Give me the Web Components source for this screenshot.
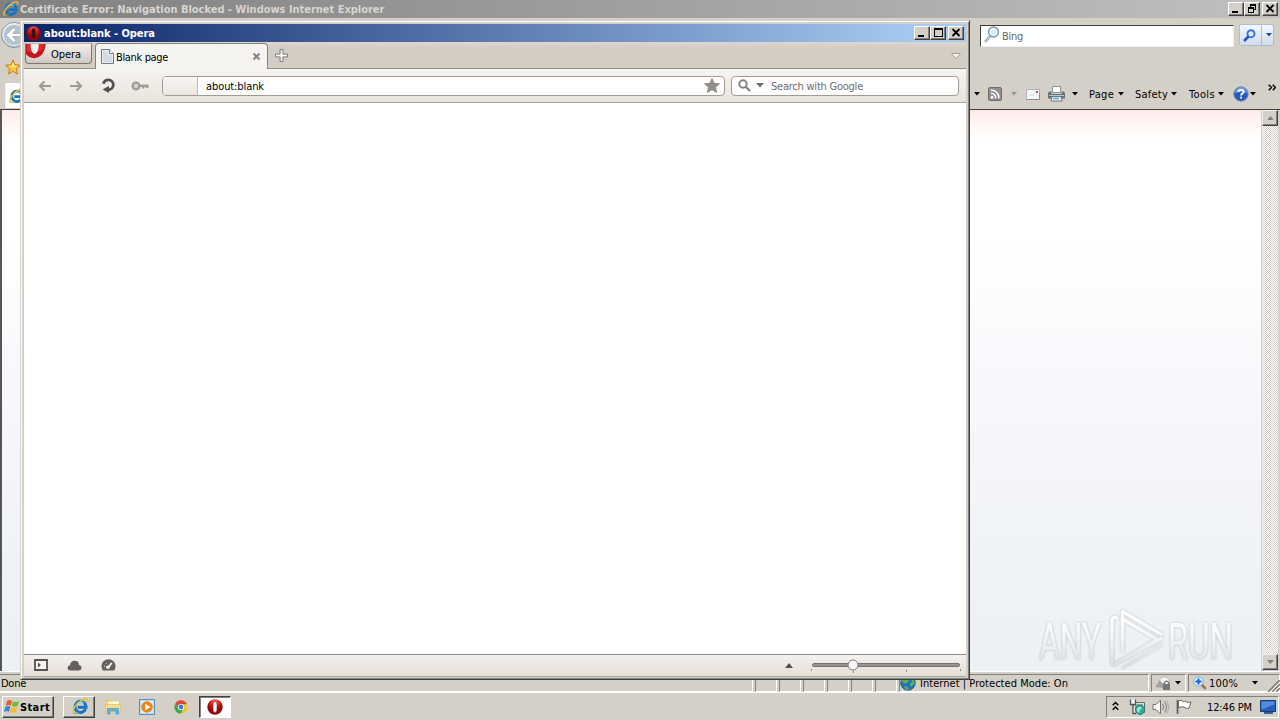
<!DOCTYPE html>
<html lang="en">
<head>
<meta charset="utf-8">
<title>Desktop</title>
<style>
  html, body { margin: 0; width: 1280px; height: 720px; overflow: hidden; background: #d4d0c8; }
  body { font: 11px/14px "DejaVu Sans Condensed", "DejaVu Sans", sans-serif; color: #000; }
</style>
</head>
<body>
<desk-top></desk-top>

<script>
const ICONS = {
  ie: `<svg viewBox="0 0 16 16"><path d="M12.8 10.4A5.2 5.2 0 1 1 13 6.8L13.2 8.6H5.4" fill="none" stroke="#1673c4" stroke-width="2.8"/><path d="M4 6.3Q7 2.5 11 4.8" fill="none" stroke="#7ed0f5" stroke-width="1.3"/><path d="M1.6 14.5C-.8 12.4 4 4.5 10.2 1.7 13.4.3 15.8.5 14.3 3.8" fill="none" stroke="#e9bd32" stroke-width="1.5"/><path d="M1.7 14.4Q3 15.3 6 13" fill="none" stroke="#78ad3b"/></svg>`,
  opera: `<svg viewBox="0 0 16 16"><defs><radialGradient id="g" cy=".2"><stop stop-color="#ff7769"/><stop offset=".6" stop-color="#cf1f1d"/><stop offset="1" stop-color="#910806"/></radialGradient></defs><ellipse cx="8" cy="8" rx="7.7" ry="7.8" fill="url(#g)"/><rect x="6" y="2.5" width="4" height="11" rx="2" ry="3" fill="var(--hole, #fff)" stroke="#9b0b0b" stroke-width=".6"/></svg>`,
  operaCut: `<svg viewBox="0 0 23 16"><path d="M0 0H21.5C21 9 16 15.5 9 15.5Q3 15.5 0 11Z" fill="#c5161c"/><path d="M1 0H20Q19 7 15 8 8 10 1 8Z" fill="#e33b3b" opacity=".65"/><path d="M5 0H14Q14 10 9.5 11 5 10 5 0Z" fill="#f3efec"/></svg>`,
  back: `<svg viewBox="0 0 28 28"><defs><linearGradient id="g" x2="0" y2="1"><stop stop-color="#fff"/><stop offset=".5" stop-color="#dce4ea"/><stop offset="1" stop-color="#a9bac6"/></linearGradient></defs><circle cx="14" cy="14" r="12.5" fill="url(#g)" stroke="#8796a4"/><circle cx="14" cy="14" r="10.7" fill="#b6c4d0" stroke="#e9f0f4"/><path d="M22 12.4H12.5L16 8.6 13.6 6.7 5.8 14 13.6 21.3 16 19.4 12.5 15.6H22Z" fill="#fff" stroke="#8798a8" stroke-width=".6"/></svg>`,
  goldStar: `<svg viewBox="0 0 16 16"><path d="m8 1 2.1 4.8 5.2.5-3.9 3.5 1.1 5.2L8 12.3 3.5 15l1.1-5.2L.7 6.3l5.2-.5Z" fill="#ffc737" stroke="#c97b15"/><path d="m8 3 1.3 3.7 3.7.4-5 1.3-4.5-1.3 3.2-.4Z" fill="#ffe895"/></svg>`,
  page: `<svg viewBox="0 0 13 15"><path d="M.5.5h8l4 4v10H.5Z" fill="#e9eef3" stroke="#6e7c8b"/><path d="M2 2h5v4h4v7H2Z" fill="#d2dce5"/><path d="M8.5.5v4h4" fill="#fff" stroke="#6e7c8b"/></svg>`,
  close: `<svg viewBox="0 0 9 9"><path d="m1.5 1.5 6 6m0-6-6 6" stroke="#88827d" stroke-width="2"/></svg>`,
  plus: `<svg viewBox="0 0 14 14"><path d="M5.5.5h3v5h5v3h-5v5h-3v-5h-5v-3h5Z" fill="#faf8f5" stroke="#77726b"/></svg>`,
  chevron: `<svg viewBox="0 0 10 8"><path d="M1 1.5h8v1L5 6.5l-4-4Z" fill="#f5f1ed" stroke="#a29b93"/></svg>`,
  left: `<svg viewBox="0 0 14 12"><path d="M13 6H3M6.5 1.5 2 6l4.5 4.5" fill="none" stroke="#a09a94" stroke-width="2.2"/></svg>`,
  right: `<svg viewBox="0 0 14 12"><path d="M1 6h10M7.5 1.5 12 6l-4.5 4.5" fill="none" stroke="#a09a94" stroke-width="2.2"/></svg>`,
  reload: `<svg viewBox="0 0 15 15"><path d="M2.4 5.8A5 5 0 1 1 7.5 11.8" fill="none" stroke="#55504c" stroke-width="2.8"/><path d="M8 8v7L1.5 11.6Z" fill="#55504c"/></svg>`,
  key: `<svg viewBox="0 0 18 10"><circle cx="5" cy="5" r="3.4" fill="#d8d2cd" stroke="#a39c96" stroke-width="2.3"/><path d="M8 3.5h9.5V7H15V6h-1.5v1.500H11V6H8Z" fill="#a39c96"/></svg>`,
  star: `<svg viewBox="0 0 16 15"><path d="m8 .5 2.1 4.9 5.4.4-4.1 3.4 1.3 5.2L8 11.7l-4.7 2.7 1.3-5.2L.5 5.8l5.4-.4Z" fill="#95918e" stroke="#777370" stroke-width=".7"/></svg>`,
  find: `<svg viewBox="0 0 13 13"><circle cx="5" cy="5" r="3.7" fill="none" stroke="#85817c" stroke-width="2"/><path d="m7.8 7.8 4.2 4.2" stroke="#85817c" stroke-width="2.3"/></svg>`,
  lens: `<svg viewBox="0 0 16 17"><path d="M6.7 9.5 1 16" stroke="#83929c" stroke-width="2.3"/><path d="M6.7 9.5 1 16" stroke="#dde5e8"/><circle cx="9.5" cy="6" r="5" fill="#d9f0f9" stroke="#829aa8" stroke-width="1.3"/><path d="M7 5q1-2 3-2" fill="none" stroke="#fff" stroke-width="1.4"/></svg>`,
  blueLens: `<svg viewBox="0 0 13 13"><circle cx="8" cy="4.7" r="3.5" fill="#ddecff" stroke="#3474d2" stroke-width="1.9"/><path d="M5.5 7.5 1 12" stroke="#2057b4" stroke-width="2.5"/></svg>`,
  down: `<svg viewBox="0 0 7 4"><path d="M0 0h7L3.5 4Z" fill="currentColor"/></svg>`,
  up: `<svg viewBox="0 0 8 5"><path d="M0 5h8L4 0Z" fill="currentColor"/></svg>`,
  rss: `<svg viewBox="0 0 14 14"><rect x=".5" y=".5" width="13" height="13" rx="1.5" fill="#909090" stroke="#6d6d6d"/><circle cx="4" cy="10.4" r="1.4" fill="#fff"/><path d="M2.8 6.2a5 5 0 0 1 5 5M2.8 3a8.2 8.2 0 0 1 8.2 8.2" fill="none" stroke="#fff" stroke-width="1.5"/></svg>`,
  mail: `<svg viewBox="0 0 14 11"><path d="M.5.5h13v10H.5Z" fill="#f7f6fa" stroke="#b2afba"/><path d="M.5 10.5h13v-6" fill="none" stroke="#8d8b9a"/><path d="M10 2h2v2h-2Z" fill="#d04b52"/><path d="M3 6h5" stroke="#d6d4dc"/></svg>`,
  printer: `<svg viewBox="0 0 17 16"><path d="M4.5.5h8v6h-8Z" fill="#fff" stroke="#8b929a"/><path d="M1 5.5h2.5V8h10V5.5H16l1 2v5H0v-5Z" fill="#657078"/><path d="M1 9.5h15" stroke="#bcc3c7"/><path d="M4 10.5h9l1 4.5H3Z" fill="#edf7fc" stroke="#647882"/><path d="M5 12.5h6" stroke="#55a8ca" stroke-width="1.5"/></svg>`,
  help: `<svg viewBox="0 0 16 16"><circle cx="8" cy="8" r="7.2" fill="#2459be" stroke="#768eac"/><path d="M2 7a6 6 0 0 1 12 0Q8 5 2 7Z" fill="#6e9ce8"/><path d="M5.4 6Q5.5 3.8 8 3.8t2.6 2.1C10.6 7.6 8 7.5 8 9.5" fill="none" stroke="#fff" stroke-width="1.8"/><path d="M7.1 10.7h1.9v1.8H7.1Z" fill="#fff"/></svg>`,
  more: `<svg viewBox="0 0 8 7"><path d="m.7.7 2.8 2.8L.7 6.3m4-5.6 2.8 2.8-2.8 2.8" fill="none" stroke="#000" stroke-width="1.4"/></svg>`,
  panel: `<svg viewBox="0 0 14 12"><path d="M1 1h12v10H1Z" fill="#f6f2ef" stroke="#58534f" stroke-width="1.8"/><path d="M4 3.5 7 6 4 8.5Z" fill="#58534f"/></svg>`,
  cloud: `<svg viewBox="0 0 15 11"><path d="M3 10.5Q.5 10.2.5 7.8T3 5.2Q3.5.7 7.7.7T12 5q2.6.3 2.6 2.8T12 10.5Z" fill="#65605d"/></svg>`,
  gauge: `<svg viewBox="0 0 15 12"><path d="M2 11.5A7 7 0 1 1 13 11.5Z" fill="#65605d"/><path d="m7.2 8.6 3.5-4.7" stroke="#f3efec" stroke-width="2"/><circle cx="6.9" cy="8.2" r="1.8" fill="#f3efec"/><path d="M3 7.2h1m1-3 .7.7" stroke="#f3efec"/></svg>`,
  min: `<svg viewBox="0 0 10 9"><path d="M1 7h6v2H1Z"/></svg>`,
  max: `<svg viewBox="0 0 10 9"><path d="M1 0h9v9H1Zm1 2v6h7V2Z" fill-rule="evenodd"/></svg>`,
  restore: `<svg viewBox="0 0 10 9"><path d="M3 0h6v6H7V5h1V2H4v1H3Z"/><path d="M1 3h6v6H1Zm1 2v3h4V5Z" fill-rule="evenodd"/></svg>`,
  x: `<svg viewBox="0 0 10 9"><path d="m1.5 1 7 7m0-7-7 7" stroke="#000" stroke-width="1.8"/></svg>`,
  globe: `<svg viewBox="0 0 16 16"><circle cx="8" cy="8" r="7.2" fill="#2370bf" stroke="#2b5d87"/><path d="M2 4Q5 0 9 1.5L7 4 9 6 6 9 2.5 7.5ZM11 3q4 2 3.4 6L11 12 9.5 9 12 7ZM4 11l4 1 1 3Q5 15 4 11Z" fill="#51b653"/><path d="M3 4q3-3 6-2" stroke="#d4f2ff" fill="none"/></svg>`,
  shield: `<svg viewBox="0 0 16 15"><circle cx="9.5" cy="6" r="5.2" fill="#f4f4f4" stroke="#b4b4b4"/><path d="m0 11 5-7 2 3 3 0-2 5Z" fill="#a2a2a2"/><path d="M8 8h7v6H8Z" fill="#777"/><path d="M9.5 8V6.5q2-2.8 4 0V8" fill="none" stroke="#777" stroke-width="1.3"/></svg>`,
  zoom: `<svg viewBox="0 0 14 14"><path d="m8.5 8.5 4.3 4.3" stroke="#9a7451" stroke-width="2.5"/><circle cx="5.5" cy="5.5" r="4.7" fill="#e2f3ff" stroke="#75a8d7"/><path d="M5.5 2.5v6m-3-3h6" stroke="#1766c7" stroke-width="2"/></svg>`,
  grip: `<svg viewBox="0 0 12 12"><path d="M0 12 12 0M4 12l8-8M8 12l4-4" stroke="#85817a" stroke-width="1.6"/><path d="M2 12 12 2M6 12l6-6m-2 6 2-2" stroke="#fff"/></svg>`,
  flag: `<svg viewBox="0 0 16 16"><path d="M1.5 1v14" stroke="#5d5d5d" stroke-width="1.7"/><path d="M2.5 1.5q3-1 5 1.5l1-1q3 2.3 6.5 1l-2 6.3q-3 .7-5-1.3Q5 7 2.5 9Z" fill="#fff" stroke="#696969"/></svg>`,
  sound: `<svg viewBox="0 0 17 16"><path d="M1 5.5h3L8.5 1v14L4 10.5H1Z" fill="#f8f8f8" stroke="#707070"/><path d="M10.5 5q2 3 0 6m2-8.5q4 5.5 0 11" fill="none" stroke="#898989" stroke-width="1.2"/><path d="M14.5 1.5q4 6.5 0 13" fill="none" stroke="#aaa"/></svg>`,
  net: `<svg viewBox="0 0 16 16"><path d="M4.5 3.5h11v10h-11Z" fill="#dde4e4" stroke="#5e6c6c"/><path d="M6 5h8v7H6Z" fill="#7ab5ad"/><path d="M1.5.5v5h5v-5M4 6v8.5h3" fill="#f5f5f5" stroke="#4d5757" stroke-width="1.3"/><circle cx="11" cy="10.8" r="4.6" fill="#35a994" stroke="#257a70"/><path d="M8 9q3-3 5 0l-2 2-1 3Q7 12 8 9Z" fill="#9ae3d0"/></svg>`,
  tray: `<svg viewBox="0 0 7 10"><path d="m.7 4.2 2.8-2.8 2.8 2.8M.7 8.7l2.8-2.8 2.8 2.8" fill="none" stroke="#000" stroke-width="1.4"/></svg>`,
  screen: `<svg viewBox="0 0 16 14"><path d="M.5.5h15v11H.5Z" fill="#245fb8" stroke="#183c72"/><path d="M1.5 1.5h13v3l-13 5Z" fill="#4e8fdf"/><path d="M4 13h9" stroke="#365e94" stroke-width="2"/></svg>`,
  windows: `<svg viewBox="0 0 16 15"><path d="M3 2q2.4-2 5.1-.3L6.8 6.6Q4.3 5.3 1.7 7Z" fill="#ed5b2b"/><path d="M9 2.2q3 1.6 6-.2L13.6 7q-3 1.6-5.8 0Z" fill="#76b837"/><path d="M1.4 8.1q2.5-1.8 5-.3L5 12.7Q2.7 11.3 0 13Z" fill="#3587d5"/><path d="M7.4 8.3q3 1.6 5.8 0L12 13q-3 1.8-6 .1Z" fill="#f5be29"/></svg>`,
  folder: `<svg viewBox="0 0 16 16"><path d="M1 3.5V1h6l1 2h7v8H1Z" fill="#e9ca69"/><path d="M3 2.5h11v5H3Z" fill="#fff8cf"/><path d="M.5 5.5h15v7H.5Z" fill="#f6df8b" stroke="#d7bb63" stroke-width=".6"/><path d="M2.5 15V9.5h11V15H11v-3.2H5V15Z" fill="#62b9e5" stroke="#3f93c2" stroke-width=".7"/></svg>`,
  media: `<svg viewBox="0 0 16 16"><path d="M.5.5h15v15H.5Z" fill="#b7d9f3" stroke="#5093c7"/><path d="M2 2h12v12H2Z" fill="#e0f0fb"/><circle cx="8" cy="8" r="5.8" fill="#f28416"/><path d="M6.2 4.7 11.5 8l-5.3 3.3Z" fill="#fff"/></svg>`,
  chrome: `<svg viewBox="0 0 14 14"><circle cx="7" cy="7" r="6.6" fill="#f4c62e"/><path d="M1.2 3.8A6.6 6.6 0 0 1 13 4.2H7L4.5 8.5Z" fill="#dc4938"/><path d="M1.2 3.8A6.6 6.6 0 0 0 6.7 13.6L9.4 8.4 4.3 8.3Z" fill="#38a85a"/><circle cx="7" cy="7" r="3.1" fill="#fff"/><circle cx="7" cy="7" r="2.4" fill="#397ee2"/></svg>`
};

class UiIcon extends HTMLElement {
  connectedCallback() {
    const root = this.attachShadow({mode: 'open'});
    const svg = ICONS[this.getAttribute('name')];
    const box = svg.match(/viewBox="0 0 (\d+) (\d+)"/);
    const w = this.getAttribute('w') || box[1];
    root.innerHTML = `
      <style>
        :host { display: block; flex: none; width: ${w}px; height: ${w * box[2] / box[1]}px; }
        svg { display: block; width: 100%; height: 100%; }
      </style>
      ${svg}`;
  }
}
customElements.define('ui-icon', UiIcon);

// Text with a set advance width, the difference is spread between the letters.
class UiLabel extends HTMLElement {
  connectedCallback() {
    const root = this.attachShadow({mode: 'open'});
    root.innerHTML = `
      <style>
        :host { display: block; flex: none; padding-top: 2px; white-space: nowrap; line-height: 14px; }
        span { display: inline-block; }
      </style>
      <span><slot></slot></span>`;
    const width = Number(this.getAttribute('w'));
    const span = root.querySelector('span');
    if (width) {
      const natural = span.getBoundingClientRect().width;
      span.style.letterSpacing = (width - natural) / this.textContent.length + 'px';
      this.style.width = width + 'px';
    }
  }
}
customElements.define('ui-label', UiLabel);

class CaptionButtons extends HTMLElement {
  connectedCallback() {
    const root = this.attachShadow({mode: 'open'});
    root.innerHTML = `
      <style>
        :host { display: flex; flex: none; margin-left: auto; }
        i { box-sizing: border-box; width: 16px; height: 14px; padding: 1px 0 0 2px; background: #d4d0c8;
            border: 1px solid; border-color: #fff #404040 #404040 #fff; box-shadow: inset -1px -1px #808080; }
        i:last-child { margin-left: 2px; }
      </style>
      <i><ui-icon name="min"></ui-icon></i><i><ui-icon name="${this.getAttribute('middle')}"></ui-icon></i><i><ui-icon name="x"></ui-icon></i>`;
  }
}
customElements.define('caption-buttons', CaptionButtons);

class ScrollBar extends HTMLElement {
  connectedCallback() {
    this.attachShadow({mode: 'open'}).innerHTML = `
      <style>
        :host { display: flex; flex: none; flex-direction: column; justify-content: space-between; width: 16px; color: #808080;
                background: repeating-conic-gradient(#fff 0 25%, #d4d0c8 0 50%) 0 0 / 2px 2px; }
        i { display: grid; place-items: center; box-sizing: border-box; height: 16px; background: #d4d0c8;
            border: 1px solid; border-color: #eee #404040 #404040 #eee; box-shadow: inset -1px -1px #808080; }
      </style>
      <i><ui-icon name="up" w="7"></ui-icon></i><i><ui-icon name="down"></ui-icon></i>`;
  }
}
customElements.define('scroll-bar', ScrollBar);

class IeWindow extends HTMLElement {
  connectedCallback() {
    this.attachShadow({mode: 'open'}).innerHTML = `
      <style>
        :host { display: flex; flex-direction: column; height: 692px; background: #d4d0c8; }
        div { display: flex; box-sizing: border-box; }
        .title { height: 18px; padding: 1px 2px 0 3px; color: #d8d5ce; font-weight: bold;
                 background: linear-gradient(90deg, #808080, #c0c0c0); }
        .nav { height: 38px; padding: 3px 6px 0 0; }
        .search { width: 254px; height: 22px; margin: 4px 5px 0 auto; padding: 0 0 0 3px; gap: 4px; background: #fff;
                  border: 1px solid; border-color: #404040 #eee #eee #404040; color: #686868; }
        .go { width: 35px; height: 22px; margin-top: 3px; border: 1px solid #a9bdd3; border-radius: 2px;
              background: linear-gradient(#f3f8fd, #cfdced); color: #1e4d97; align-items: center; }
        .go b { align-self: stretch; width: 1px; margin: 0 4px 0 5px; background: #a9bdd3; }
        .cmd { height: 52px; }
        .fav { flex-direction: column; width: 22px; padding: 3px 0 0 5px; gap: 8px; }
        .fav p { margin: 0; padding: 5px 0 0 3px; background: #fff; height: 20px; border-left: 1px solid #eee; }
        .tools { align-items: center; width: 306px; height: 30px; margin: 21px 0 0 auto; padding-top: 4px; }
        .page { flex: 1; border-top: 1px solid #404040; border-left: 2px solid #555; min-height: 0; margin-top: 1px; }
        .body { flex: 1; margin-right: 1px; background: linear-gradient(#ffe9e9 0, #fff6f5 14px, #fff 32px, #fff 130px, #f9f9fd 260px, #eff2f6 450px, #edf0f4 100%); }
        .status { height: 21px; padding-top: 2px; gap: 2px; border-top: 1px solid #fff; }
        .status > div { width: 22px; border: 1px solid; border-color: #808080 #fff #fff #808080; align-items: center; height: 18px; }
        .status > .done { width: 753px; border-left: 0; }
      </style>
      <div class="title"><ui-icon name="ie"></ui-icon><ui-label w="364" style="margin-left:1px">Certificate Error: Navigation Blocked - Windows Internet Explorer</ui-label>
        <caption-buttons middle="restore" style="margin-top:1px"></caption-buttons></div>
      <div class="nav"><ui-icon name="back"></ui-icon>
        <div class="search"><ui-icon name="lens"></ui-icon><ui-label w="21" style="margin-top:2px;margin-left:-2px">Bing</ui-label></div>
        <div class="go"><ui-icon name="blueLens" style="margin-left:3px"></ui-icon><b></b><ui-icon name="down" w="6"></ui-icon></div></div>
      <div class="cmd">
        <div class="fav"><ui-icon name="goldStar"></ui-icon><p><ui-icon name="ie"></ui-icon></p></div>
        <div class="tools">
          <ui-icon name="down" w="6"></ui-icon>
          <ui-icon name="rss" style="margin-left:8px"></ui-icon>
          <ui-icon name="down" w="6" style="margin-left:9px;color:#9b958e"></ui-icon>
          <ui-icon name="mail" style="margin-left:9px"></ui-icon>
          <ui-icon name="printer" style="margin-left:8px"></ui-icon>
          <ui-icon name="down" w="6" style="margin-left:7px"></ui-icon>
          <ui-label w="25" style="margin-left:11px">Page</ui-label><ui-icon name="down" w="6" style="margin-left:4px"></ui-icon>
          <ui-label w="33" style="margin-left:11px">Safety</ui-label><ui-icon name="down" w="6" style="margin-left:3px"></ui-icon>
          <ui-label w="26" style="margin-left:12px">Tools</ui-label><ui-icon name="down" w="6" style="margin-left:3px"></ui-icon>
          <ui-icon name="help" style="margin-left:9px"></ui-icon><ui-icon name="down" w="6" style="margin-left:1px"></ui-icon>
          <ui-icon name="more" style="margin:0 0 13px 12px"></ui-icon>
        </div>
      </div>
      <div class="page"><div class="body"></div><scroll-bar style="margin:0 2px 1px 0"></scroll-bar></div>
      <div class="status">
        <div class="done"><ui-label w="25" style="margin-left:1px">Done</ui-label></div>
        <div></div><div></div><div></div><div></div><div></div><div></div>
        <div style="width:250px"><ui-icon name="globe" style="margin-left:0"></ui-icon><ui-label w="148" style="margin-left:4px">Internet | Protected Mode: On</ui-label></div>
        <div style="width:35px"><ui-icon name="shield" style="margin-left:3px"></ui-icon><ui-icon name="down" w="6" style="margin-left:4px"></ui-icon></div>
        <div style="width:92px"><ui-icon name="zoom" style="margin-left:4px"></ui-icon><ui-label w="29" style="margin-left:2px">100%</ui-label>
          <ui-icon name="down" w="6" style="margin-left:14px"></ui-icon><ui-icon name="grip" style="margin:5px 0 0 10px"></ui-icon></div>
      </div>`;
  }
}
customElements.define('ie-window', IeWindow);

class ZoomSlider extends HTMLElement {
  connectedCallback() {
    this.attachShadow({mode: 'open'}).innerHTML = `
      <style>:host { display: block; flex: none; width: 152px; height: 14px; } svg { display: block; }</style>
      <svg width="152" height="14">
        <rect x="2.5" y="4.5" width="147" height="3" rx="1.5" fill="#99948f" stroke="#75706b"/>
        <path d="M1.5 10v2m42 0v2m53-3v2m54-3v2" stroke="#8c8782"/>
        <circle cx="43" cy="6" r="5" fill="#f8f6f4" stroke="#7d7873"/>
      </svg>`;
  }
}
customElements.define('zoom-slider', ZoomSlider);

class OperaWindow extends HTMLElement {
  connectedCallback() {
    this.attachShadow({mode: 'open'}).innerHTML = `
      <style>
        :host { display: flex; flex-direction: column; box-sizing: border-box; width: 950px; height: 660px; padding: 3px 3px 2px;
                background: #d4d0c8; border: 1px solid; border-color: #d4d0c8 #404040 #404040 #d4d0c8;
                box-shadow: inset 1px 1px #fff, inset -1px -1px #808080; }
        div { display: flex; box-sizing: border-box; align-items: center; flex: none; }
        .title { height: 18px; padding: 0 2px; color: #fff; font-weight: bold; background: linear-gradient(90deg, #0a246a, #a6caf0 95%); --hole: #300d20; }
        .tabs { height: 27px; border-bottom: 1px solid #938e87; align-items: flex-start; background: linear-gradient(#dcd7d0, #d3cdc4 6px); }
        .menu { width: 67px; height: 21px; margin: 1px 3px 0 1px; border: 1px solid #7c7771; border-top-color: #bbb5ae; border-radius: 0 0 4px 4px;
                background: linear-gradient(#f4f1ed, #cec8c0); align-items: flex-start; }
        .tab { width: 173px; height: 26px; margin-top: 1px; padding: 0 6px 0 5px; border: 1px solid #86817b; border-bottom: 0; border-radius: 4px 4px 0 0; background: #f6f4f1; }
        .bar { height: 34px; background: linear-gradient(#f6f4f1, #e9e3dc); border-bottom: 1px solid #aaa39b; padding-left: 14px; }
        .field { height: 20px; border: 1px solid #a29b94; border-radius: 4px; background: #fff; overflow: hidden; }
        .field b { width: 34px; height: 18px; background: linear-gradient(#f8f5f2, #ece6e1); border-right: 1px solid #c3bcb5; }
        .view { flex: 1; background: #fff; }
        .status { height: 23px; padding: 0 0 1px 10px; background: linear-gradient(#f4f0ed, #e6dfd7); border-top: 1px solid #928c86; border-bottom: 1px solid #aaa39b; }
      </style>
      <div class="title"><ui-icon name="opera" w="15"></ui-icon><ui-label w="111" style="margin-left:3px">about:blank - Opera</ui-label>
        <caption-buttons middle="max"></caption-buttons></div>
      <div class="tabs">
        <div class="menu"><ui-icon name="operaCut" w="21"></ui-icon><ui-label w="30" style="margin:2px 0 0 4px">Opera</ui-label></div>
        <div class="tab"><ui-icon name="page"></ui-icon><ui-label w="52" style="margin-left:2px">Blank page</ui-label><ui-icon name="close" style="margin-left:auto"></ui-icon></div>
        <ui-icon name="plus" w="13" style="margin:7px 0 0 7px"></ui-icon>
        <ui-icon name="chevron" style="margin:10px 5px 0 auto"></ui-icon>
      </div>
      <div class="bar">
        <ui-icon name="left"></ui-icon><ui-icon name="right" style="margin-left:17px"></ui-icon>
        <ui-icon name="reload" style="margin-left:18px"></ui-icon><ui-icon name="key" style="margin-left:15px"></ui-icon>
        <div class="field" style="width:563px;margin-left:13px"><b></b><ui-label w="58" style="margin-left:8px">about:blank</ui-label><ui-icon name="star" style="margin:0 4px 0 auto"></ui-icon></div>
        <div class="field" style="width:228px;margin-left:6px;color:#716d69"><ui-icon name="find" style="margin-left:6px"></ui-icon><ui-icon name="down" w="8" style="margin-left:5px"></ui-icon><ui-label w="92" style="margin-left:7px">Search with Google</ui-label></div>
      </div>
      <div class="view"></div>
      <div class="status">
        <ui-icon name="panel"></ui-icon><ui-icon name="cloud" style="margin-left:19px"></ui-icon><ui-icon name="gauge" style="margin-left:19px"></ui-icon>
        <ui-icon name="up" style="margin-left:auto;color:#56514d"></ui-icon><zoom-slider style="margin:2px 4px 0 17px"></zoom-slider>
      </div>`;
  }
}
customElements.define('opera-window', OperaWindow);

class TaskBar extends HTMLElement {
  connectedCallback() {
    this.attachShadow({mode: 'open'}).innerHTML = `
      <style>
        :host { display: flex; box-sizing: border-box; height: 28px; padding: 1px 1px 1px 2px; border-top: 1px solid #fff; background: #d4d0c8; align-items: center; }
        div { display: flex; box-sizing: border-box; align-items: center; height: 22px; }
        .up { border: 1px solid; border-color: #fff #404040 #404040 #fff; box-shadow: inset -1px -1px #808080; }
        .down { border: 1px solid; border-color: #404040 #fff #fff #404040; box-shadow: inset 1px 1px #808080; background: #fff; }
        .tray { margin-left: auto; width: 173px; border: 1px solid; border-color: #808080 #fff #fff #808080; }
      </style>
      <div class="up" style="width:52px;font-weight:bold"><ui-icon name="windows" style="margin-left:1px"></ui-icon><ui-label w="30" style="margin-left:0">Start</ui-label></div>
      <div class="up" style="width:32px;margin-left:9px"><ui-icon name="ie" w="17" style="margin-left:8px"></ui-icon></div>
      <ui-icon name="folder" style="margin-left:10px"></ui-icon>
      <ui-icon name="media" style="margin-left:18px"></ui-icon>
      <ui-icon name="chrome" style="margin-left:19px"></ui-icon>
      <div class="down" style="width:32px;margin-left:11px"><ui-icon name="opera" style="margin-left:7px"></ui-icon></div>
      <div class="tray">
        <ui-icon name="tray" style="margin:0 0 2px 5px"></ui-icon><ui-icon name="net" style="margin-left:10px"></ui-icon>
        <ui-icon name="sound" style="margin-left:7px"></ui-icon><ui-icon name="flag" style="margin-left:7px"></ui-icon>
        <ui-label w="45" style="margin-left:15px">12:46 PM</ui-label><ui-icon name="screen" style="margin-left:8px"></ui-icon>
      </div>`;
  }
}
customElements.define('task-bar', TaskBar);

class WaterMark extends HTMLElement {
  connectedCallback() {
    this.attachShadow({mode: 'open'}).innerHTML = `
      <style>
        :host { display: block; width: 230px; height: 76px; }
        svg { display: block; filter: drop-shadow(0 0 1.2px #8888); }
        text { font: 400 50px Roboto, sans-serif; fill: url(#fade); stroke: url(#fade); stroke-width: .4px; }
      </style>
      <svg width="230" height="76">
        <defs><linearGradient id="fade" gradientUnits="userSpaceOnUse" x1="0" y1="10" x2="0" y2="58"><stop stop-color="#fff"/><stop offset=".45" stop-color="#f4f5f7"/><stop offset="1" stop-color="#dedfe2"/></linearGradient></defs>
        <text x="3" y="53" textLength="62" lengthAdjust="spacingAndGlyphs">ANY</text>
        <text x="132" y="53" textLength="65" lengthAdjust="spacingAndGlyphs">RUN</text>
        <g fill="none" stroke="url(#fade)" stroke-width="3.4" stroke-linejoin="round">
          <path d="M86.5 46V5.5L126.5 29"/><path d="M86.5 46V13L121 33.5 86 54.5"/>
          <path d="M82 12.5Q76 10 76 15V56q0 3 3 2l47-26"/><path d="M86 62.5 126 38.5" stroke-width="2"/>
        </g>
      </svg>`;
  }
}
customElements.define('water-mark', WaterMark);

class DeskTop extends HTMLElement {
  connectedCallback() {
    this.attachShadow({mode: 'open'}).innerHTML = `
      <style>
        :host { display: flex; flex-direction: column; position: relative; width: 1280px; height: 720px; overflow: hidden; }
        opera-window { position: absolute; left: 20px; top: 20px; }
        water-mark { position: absolute; left: 1036px; top: 606px; }
      </style>
      <ie-window></ie-window>
      <task-bar></task-bar>
      <opera-window></opera-window>
      <water-mark></water-mark>`;
  }
}
customElements.define('desk-top', DeskTop);
</script>
</body>
</html>
